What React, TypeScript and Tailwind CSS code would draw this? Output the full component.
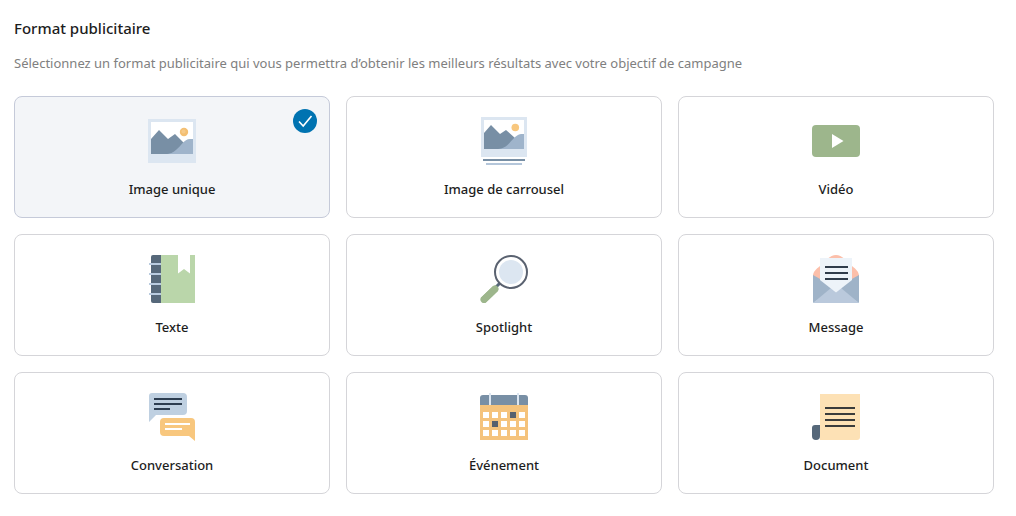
import { useState, type ReactNode } from "react";

function Icon({ children }: { children: ReactNode }) {
  return (
    <svg viewBox="0 0 48 48" className="size-12" aria-hidden="true">
      {children}
    </svg>
  );
}

function SingleImageIcon() {
  return (
    <Icon>
      <path d="M0 2h48v44H0z" fill="#dce6f1" />
      <path d="M3 5h42v32H3z" fill="#fff" />
      <path d="M3 22l8-9 9 9 7-5 9 9v11H3z" fill="#788fa5" />
      <path d="M19 37c5-.5 7-2.500 9.500-4.500C33 29 36 22 42 22h3v15z" fill="#9fb4cb" />
      <circle cx="36" cy="15" r="4.200" fill="#f3bf73" />
      <circle cx="35.500" cy="14.500" r="2" fill="#f5ca8a" />
    </Icon>
  );
}

function CarouselIcon() {
  return (
    <Icon>
      <path d="M1 0h46v40H1z" fill="#dce6f1" />
      <path d="M4 3h40v29H4z" fill="#fff" />
      <path d="M4 16l7-8 9 9 6-4 9 8v11H4z" fill="#788fa5" />
      <path d="M18 32c5-.5 7-2 9.500-4C32 24 35 18 41 17h3v15z" fill="#9fb4cb" />
      <circle cx="35.300" cy="10.500" r="3.800" fill="#f8c77e" />
      <path d="M3 42h42v2H3z" fill="#788fa5" />
      <path d="M6 46h36v2H6z" fill="#b4c6da" />
    </Icon>
  );
}

function VideoIcon() {
  return (
    <Icon>
      <rect y="8" width="48" height="32" rx="4" fill="#9db68c" />
      <path d="M20 17l11.500 7L20 31z" fill="#fff" />
    </Icon>
  );
}

function TextIcon() {
  return (
    <Icon>
      <path d="M13 0H5a2 2 0 0 0-2 2v44a2 2 0 0 0 2 2h8z" fill="#56687a" />
      <path d="M13 0h34v48H13z" fill="#bad6aa" />
      <path d="M30 0h12v18.500L36 14l-6 4.500z" fill="#fff" />
      <path d="M1 9h12M1 19h12M1 29h12M1 39h12" stroke="#b9cbdf" strokeWidth="2" />
    </Icon>
  );
}

function SpotlightIcon() {
  return (
    <Icon>
      <path d="M19.500 28.500L15 33" stroke="#56687a" strokeWidth="3" />
      <path d="M15.500 33.500L3 45.500" stroke="#9db68c" strokeWidth="7" />
      <path d="M15 34L4 44.500" stroke="#9db68c" strokeWidth="7" strokeLinecap="round" />
      <circle cx="31" cy="17" r="16" fill="#fff" stroke="#5a6270" strokeWidth="2" />
      <circle cx="31" cy="17" r="12" fill="#dce6f1" />
    </Icon>
  );
}

function MessageIcon() {
  return (
    <Icon>
      <path d="M1 27v-6c0-4 3-7 7-10C13 6 18 0 24 0s11 6 16 11c4 3 7 6 7 10v6z" fill="#fcbfaa" />
      <path d="M1 20v28l23-15z" fill="#9fb3c8" />
      <path d="M47 20v28L24 33z" fill="#9fb3c8" />
      <path d="M1 48l18-15h10l18 15z" fill="#bac9dc" />
      <path d="M8 3h32v22L24 37.500 8 25z" fill="#edf3f9" />
      <path d="M13 12h23M13 18h23M13 24h23" stroke="#303c4b" strokeWidth="2" />
    </Icon>
  );
}

function ConversationIcon() {
  return (
    <Icon>
      <path d="M4 0h31a4 4 0 0 1 4 4v14a4 4 0 0 1-4 4H8l-7 7V3a3 3 0 0 1 3-3z" fill="#bfd0e1" />
      <path d="M6 6h28M6 11h28M6 16h16" stroke="#2d3d50" strokeWidth="2" />
      <path d="M16 25h27a4 4 0 0 1 4 4v19l-6-5H16a4 4 0 0 1-4-4V29a4 4 0 0 1 4-4z" fill="#f8c77e" />
      <path d="M17 31h25M17 36h17" stroke="#fff" strokeWidth="2" />
    </Icon>
  );
}

function EventIcon() {
  return (
    <Icon>
      <path d="M0 12h48v35H0z" fill="#f5c37c" />
      <path d="M0 12V5a3 3 0 0 1 3-3h42a3 3 0 0 1 3 3v7z" fill="#788fa5" />
      <path d="M10 0v12M38 0v12" stroke="#dce6f1" strokeWidth="2" />
      {[19, 28, 37].map((y, row) =>
        [3, 12, 21, 30, 39].map((x, col) => (
          <rect
            key={`${x}-${y}`}
            x={x}
            y={y}
            width="6"
            height="6"
            fill={(row === 0 && col === 3) || (row === 1 && col === 1) ? "#56606e" : "#fff"}
          />
        )),
      )}
    </Icon>
  );
}

function DocumentIcon() {
  return (
    <Icon>
      <path d="M8 1h40v43a3 3 0 0 1-3 3H8z" fill="#fde1b5" />
      <path d="M8 32H3a3 3 0 0 0-3 3v8a4 4 0 0 0 8 0z" fill="#56687a" />
      <path d="M13 15h30M13 21h30M13 27h30M13 33h30" stroke="#3a3b3b" strokeWidth="2" />
    </Icon>
  );
}

const formats = [
  { id: "image", label: "Image unique", icon: <SingleImageIcon /> },
  { id: "carousel", label: "Image de carrousel", icon: <CarouselIcon /> },
  { id: "video", label: "Vidéo", icon: <VideoIcon /> },
  { id: "text", label: "Texte", icon: <TextIcon /> },
  { id: "spotlight", label: "Spotlight", icon: <SpotlightIcon /> },
  { id: "message", label: "Message", icon: <MessageIcon /> },
  { id: "conversation", label: "Conversation", icon: <ConversationIcon /> },
  { id: "event", label: "Événement", icon: <EventIcon /> },
  { id: "document", label: "Document", icon: <DocumentIcon /> },
];

export default function App() {
  const [selected, setSelected] = useState("image");

  return (
    <main className="bg-white pt-4 pr-[22px] pb-5 pl-[14px] font-['Noto_Sans',sans-serif]">
      <h1 id="format-title" className="text-[15px] leading-6 font-medium text-[#1d1d1d]">
        Format publicitaire
      </h1>
      <p className="mt-3 text-[13px] leading-[22px] text-[#808080]">
        Sélectionnez un format publicitaire qui vous permettra d’obtenir les meilleurs résultats avec votre objectif de
        campagne
      </p>
      <div role="radiogroup" aria-labelledby="format-title" className="mt-[22px] grid grid-cols-3 gap-4">
        {formats.map(({ id, label, icon }) => (
          <label
            key={id}
            htmlFor={id}
            className="relative flex cursor-pointer flex-col items-center rounded-lg border border-[#d5d5d9] px-4 pt-5 pb-4 has-checked:border-[#c5cad9] has-checked:bg-[#f3f5f8] has-focus-visible:outline-2 has-focus-visible:outline-[#0073b1]"
          >
            <input
              type="radio"
              id={id}
              name="format"
              value={id}
              checked={selected === id}
              onChange={() => setSelected(id)}
              className="sr-only"
            />
            {icon}
            <span className="mt-3 text-[13px] leading-6 font-medium text-[#1d1d1d]">{label}</span>
            {selected === id && (
              <svg viewBox="0 0 24 24" className="absolute top-3 right-3 size-6" aria-hidden="true">
                <circle cx="12" cy="12" r="12" fill="#0073b1" />
                <path d="M6 12.500l4.200 4.500L18.500 7" fill="none" stroke="#fff" strokeWidth="1.600" />
              </svg>
            )}
          </label>
        ))}
      </div>
    </main>
  );
}
